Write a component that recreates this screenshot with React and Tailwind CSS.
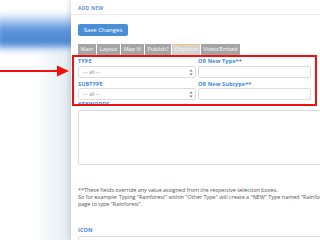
import React from "react";

const font = { fontFamily: '"Open Sans", "Liberation Sans", sans-serif' };

function UpDown() {
  return (
    <svg width="4" height="7" viewBox="0 0 4 7" className="shrink-0">
      <path d="M2 0.5 L3.6 2.6 H0.4 Z" fill="#777" />
      <path d="M2 6.5 L3.6 4.4 H0.4 Z" fill="#777" />
    </svg>
  );
}

function Select() {
  return (
    <div className="flex h-[12px] w-[118px] items-center justify-between rounded-[2px] border border-[#dcdcdc] bg-white pl-[4px] pr-[2px]">
      <span className="text-[5px] leading-none text-[#8a8a8a]">--- all ---</span>
      <UpDown />
    </div>
  );
}

function Label({ children, className = "" }) {
  return (
    <div className={`text-[5.5px] font-bold leading-[6px] tracking-[0.02em] text-[#3f86d8] ${className}`}>
      {children}
    </div>
  );
}

const tabs = [
  { name: "Main", w: "w-[18px]" },
  { name: "Layout", w: "w-[23px]" },
  { name: "Map It!", w: "w-[23px]" },
  { name: "Publish?", w: "w-[26px]" },
  { name: "Organize", w: "w-[28px]", active: true },
  { name: "Video/Embed", w: "w-[39px]" },
];

export default function App() {
  return (
    <div className="relative flex h-[240px] w-[320px] overflow-hidden bg-white" style={font}>
      <div className="relative w-[71px] shrink-0 overflow-hidden">
        <div className="flex h-full scale-110 flex-col blur-[3px]">
          <div className="h-[22px] bg-white" />
          <div className="h-[12px] bg-gradient-to-b from-white to-[#86b1e6]" />
          <div className="h-[18px] bg-gradient-to-b from-[#6a9ddf] to-[#4282d1]" />
          <div className="h-[6px] bg-gradient-to-b from-[#7aa8e0] to-white" />
          <div className="flex-1 bg-gradient-to-r from-white via-white to-[#dde8f0]" />
        </div>
      </div>

      <div className="relative z-10 flex-1 bg-white shadow-[-2px_0_4px_rgba(0,0,0,0.12)]">
        <div className="border-b border-[#ececec] pl-[7px] pt-[5px] pb-[3px]">
          <div className="text-[5px] font-bold leading-[6px] tracking-[0.04em] text-[#6a93c9]">ADD NEW</div>
        </div>

        <div className="pl-[7px]">
          <button className="mt-[9px] flex h-[12px] w-[50px] items-center justify-center rounded-[2px] bg-[#4a8ed8] text-[6px] leading-none text-white">
            Save Changes
          </button>

          <div className="mt-[8px] flex h-[11px] gap-[1px]">
            {tabs.map((t) => (
              <div
                key={t.name}
                className={`${t.w} flex items-center justify-center text-[5.5px] leading-none ${
                  t.active ? "border-t border-[#f3c27a] bg-[#d4d4d4] text-[#f4f4f4]" : "bg-[#a4a4a4] text-white"
                }`}
              >
                {t.name}
              </div>
            ))}
          </div>

          <div className="mt-[3px] flex gap-[2px]">
            <div className="flex flex-col">
              <Label>TYPE</Label>
              <div className="mt-[2px]">
                <Select />
              </div>
              <Label className="mt-[3px]">SUBTYPE</Label>
              <div className="mt-[1px]">
                <Select />
              </div>
            </div>
            <div className="flex flex-col">
              <Label>OR New Type**</Label>
              <div className="mt-[2px] h-[12px] w-[113px] rounded-[2px] border border-[#dcdcdc] bg-white" />
              <Label className="mt-[3px]">OR New Subtype**</Label>
              <div className="mt-[1px] h-[12px] w-[113px] rounded-[2px] border border-[#dcdcdc] bg-white" />
            </div>
          </div>

          <Label className="mt-[1px]">KEYWORDS</Label>
          <div className="mt-[3px] h-[55px] w-[270px] rounded-[2px] border border-[#dcdcdc] bg-white" />

          <div className="mt-[22px] whitespace-nowrap text-[5.5px] leading-[7px] tracking-[-0.04px] text-[#555]">
            <div>**These fields override any value assigned from the respective selection boxes.</div>
            <div>So for example: Typing "Rainforest" within "Other Type" will create a "NEW" Type named "Rainforest" and assign this</div>
            <div>page to type "Rainforest".</div>
          </div>

          <Label className="mt-[19px]">ICON</Label>
          <div className="mt-[3px] h-[12px] w-[270px] rounded-[2px] border border-[#dcdcdc] bg-white" />
        </div>
      </div>

      <div className="pointer-events-none absolute left-[72px] top-[55px] z-20 h-[51px] w-[245px] border-2 border-[#f01010]" />

      <svg className="pointer-events-none absolute left-0 top-[64px] z-20" width="72" height="14" viewBox="0 0 72 14">
        <rect x="0" y="6" width="60" height="2" fill="#f01010" />
        <path d="M57 1.5 L69 7 L57 12.5 Z" fill="#f01010" />
      </svg>
    </div>
  );
}
